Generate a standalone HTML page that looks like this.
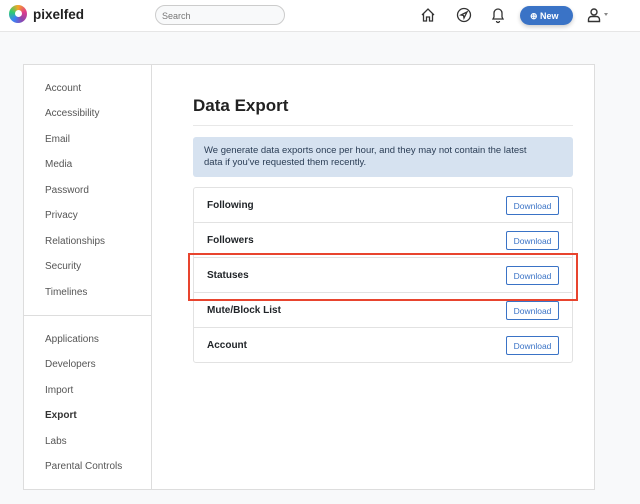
<!DOCTYPE html>
<html><head><style>
*{box-sizing:border-box;margin:0;padding:0}
body{width:640px;height:504px;background:#f8f9fa;font-family:"Liberation Sans",sans-serif;position:relative;overflow:hidden;color:#212529}
.hdr{position:absolute;left:0;top:0;width:640px;height:32px;background:#fff;border-bottom:1px solid #e6e6e6}
.logo{position:absolute;left:9px;top:5px;width:18px;height:18px;border-radius:50%;background:conic-gradient(#f5a623,#e03b8b,#8e44ad,#3b82f6,#2ecc71,#f5a623)}
.logo:after{content:"";position:absolute;left:6px;top:5px;width:7px;height:7px;border-radius:50%;background:#fff}
.brand{position:absolute;left:33px;top:7px;font-size:13.5px;font-weight:bold;color:#222}
.search{position:absolute;left:155px;top:5px;width:130px;height:20px;border:1px solid #ccc;border-radius:10px;background:#f8f9fa;font-size:9px;color:#777;padding:5px 0 0 6px}
.new{position:absolute;left:520px;top:6px;width:53px;height:19px;background:#3a73c6;border-radius:10px;color:#fff;font-size:9px;font-weight:bold;padding:5px 0 0 10px;box-shadow:0 2px 4px rgba(0,0,0,.2)}
.card{position:absolute;left:23px;top:64px;width:572px;height:426px;background:#fff;border:1px solid #ddd}
.side{position:absolute;left:0;top:0;width:128px;height:100%;border-right:1px solid #ddd}
.side .it{position:absolute;left:21px;font-size:10px;color:#555}
.sep{position:absolute;left:0;top:250px;width:128px;border-top:1px solid #ddd}
h1{position:absolute;left:193px;top:96px;font-size:17px;font-weight:bold;color:#222}
.hr{position:absolute;left:193px;top:125px;width:380px;border-top:1px solid #e8e8e8}
.alert{position:absolute;left:193px;top:137px;width:380px;height:40px;background:#d6e2f0;border-radius:3px;font-size:9.5px;line-height:12px;color:#2a3d55;padding:8px 11px;white-space:nowrap}
.list{position:absolute;left:193px;top:187px;width:380px;height:176px;border:1px solid #e2e2e2;border-radius:3px}
.row{position:absolute;left:0;width:378px;height:35px;border-bottom:1px solid #e2e2e2}
.row span{position:absolute;left:13px;top:12px;font-size:10px;font-weight:bold}
.row b{position:absolute;left:312px;top:8px;width:53px;height:19px;border:1px solid #3a73c6;border-radius:2px;color:#3a73c6;font-size:8.5px;font-weight:normal;text-align:center;padding-top:4px}
.red{position:absolute;left:188px;top:253px;width:390px;height:48px;border:2px solid #e8442e}
</style></head><body>
<div class="hdr">
<div class="logo"></div><div class="brand">pixelfed</div>
<div class="search">Search</div>
<svg style="position:absolute;left:420px;top:7px" width="16" height="16" viewBox="0 0 16 16" fill="none" stroke="#333" stroke-width="1.3"><path d="M2 8 L8 2 L14 8 M3.5 6.5 V14 H6.5 V10 H9.5 V14 H12.5 V6.5"/></svg>
<svg style="position:absolute;left:456px;top:7px" width="16" height="16" viewBox="0 0 16 16" fill="none" stroke="#333" stroke-width="1.3"><circle cx="8" cy="8" r="6.5"/><path d="M5 8 L11 5 L8 11 L7.5 8.5 Z"/></svg>
<svg style="position:absolute;left:490px;top:6px" width="16" height="18" viewBox="0 0 16 18" fill="none" stroke="#333" stroke-width="1.3"><path d="M3 13 H13 L12 11 V7 A4 4 0 0 0 4 7 V11 Z M6.5 15 A1.5 1.5 0 0 0 9.5 15"/></svg>
<div class="new">⊕ New</div>
<svg style="position:absolute;left:587px;top:7px" width="14" height="16" viewBox="0 0 14 16" fill="none" stroke="#333" stroke-width="1.4"><circle cx="7" cy="5" r="3"/><path d="M1.5 14.5 V12.5 A3 3 0 0 1 4.5 9.5 H9.5 A3 3 0 0 1 12.5 12.5 V14.5 Z"/></svg>
<div style="position:absolute;left:604px;top:13px;width:0;height:0;border-left:2.5px solid transparent;border-right:2.5px solid transparent;border-top:3px solid #888"></div>
</div>
<div class="card"><div class="side">
<div class="it" style="top:18px">Account</div><div class="it" style="top:43px">Accessibility</div><div class="it" style="top:69px">Email</div><div class="it" style="top:94px">Media</div><div class="it" style="top:120px">Password</div><div class="it" style="top:145px">Privacy</div><div class="it" style="top:171px">Relationships</div><div class="it" style="top:196px">Security</div><div class="it" style="top:222px">Timelines</div>
<div class="sep"></div>
<div class="it" style="top:269px">Applications</div><div class="it" style="top:294px">Developers</div><div class="it" style="top:320px">Import</div><div class="it" style="top:345px;font-weight:bold;color:#333">Export</div><div class="it" style="top:371px">Labs</div><div class="it" style="top:396px">Parental Controls</div>
</div></div>
<h1>Data Export</h1><div class="hr"></div>
<div class="alert">We generate data exports once per hour, and they may not contain the latest<br>data if you've requested them recently.</div>
<div class="list">
<div class="row" style="top:0"><span>Following</span><b>Download</b></div>
<div class="row" style="top:35px"><span>Followers</span><b>Download</b></div>
<div class="row" style="top:70px"><span>Statuses</span><b>Download</b></div>
<div class="row" style="top:105px"><span>Mute/Block List</span><b>Download</b></div>
<div class="row" style="top:140px;border:none"><span>Account</span><b>Download</b></div>
</div>
<div class="red"></div>
</body></html>
